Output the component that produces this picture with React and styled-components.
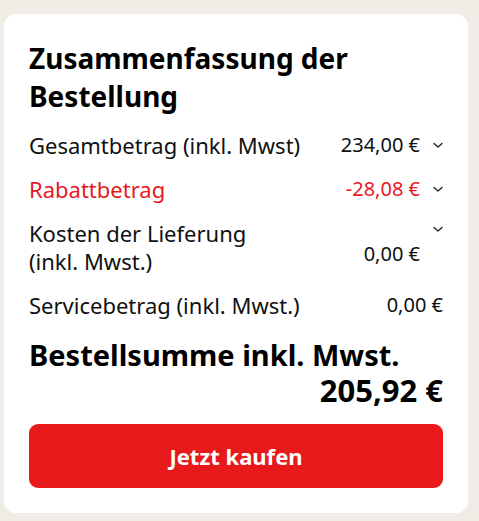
import styled, { createGlobalStyle } from "styled-components";

const Global = createGlobalStyle`
  body {
    margin: 0;
    background: #efebe5;
    font-family: "Noto Sans", "Open Sans", sans-serif;
    color: #0f1111;
  }
`;

const Page = styled.div`
  padding: 14px 11px 7px 4px;
`;

const Card = styled.div`
  background: #fff;
  border-radius: 12px;
  padding: 25px 25px 25px 25px;
  display: flex;
  flex-direction: column;
`;

const Title = styled.h2`
  margin: 0 0 8px 0;
  font-size: 28px;
  line-height: 38px;
  font-weight: 700;
  color: #000;
`;

const Row = styled.div`
  display: flex;
  justify-content: space-between;
  align-items: center;
  padding: 8px 0;
  font-size: 22px;
  line-height: 28px;
  color: ${(p) => (p.$red ? "#e5191f" : "#0f1111")};
`;

const Label = styled.div`
  white-space: ${(p) => (p.$wrap ? "normal" : "nowrap")};
  max-width: ${(p) => (p.$wrap ? "240px" : "none")};
`;

const AmountBox = styled.div`
  display: flex;
  align-items: ${(p) => (p.$top ? "flex-start" : "center")};
  gap: 13px;
`;

const Amount = styled.span`
  font-size: 20px;
  white-space: nowrap;
  padding-top: ${(p) => (p.$top ? "14px" : "0")};
`;

const Chevron = styled.svg`
  width: 10px;
  height: 10px;
  margin-top: ${(p) => (p.$top ? "-2px" : "0")};
`;

const TotalBlock = styled.div`
  margin-top: 11px;
  display: flex;
  flex-direction: column;
`;

const TotalLabel = styled.div`
  font-size: 29px;
  font-weight: 700;
  line-height: 34px;
  color: #000;
`;

const TotalValue = styled.div`
  text-align: right;
  font-size: 31px;
  font-weight: 700;
  line-height: 36px;
  color: #000;
`;

const BuyButton = styled.button`
  margin-top: 16px;
  height: 64px;
  border: none;
  border-radius: 9px;
  background: #e8191b;
  color: #fff;
  font-family: inherit;
  font-size: 22px;
  font-weight: 700;
  cursor: pointer;
`;

const Down = ({ top }) => (
  <Chevron $top={top} viewBox="0 0 10 10">
    <path d="M1 3.5 L5 7 L9 3.5" fill="none" stroke="#222" strokeWidth="1.4" strokeLinecap="round" strokeLinejoin="round" />
  </Chevron>
);

const rows = [
  { label: "Gesamtbetrag (inkl. Mwst)", amount: "234,00 €", chevron: true },
  { label: "Rabattbetrag", amount: "-28,08 €", chevron: true, red: true },
  { label: "Kosten der Lieferung (inkl. Mwst.)", amount: "0,00 €", chevron: true, top: true },
  { label: "Servicebetrag (inkl. Mwst.)", amount: "0,00 €" },
];

export default function App() {
  return (
    <Page>
      <Global />
      <Card>
        <Title>Zusammenfassung der Bestellung</Title>
        {rows.map((r) => (
          <Row key={r.label} $red={r.red}>
            <Label $wrap={r.top}>{r.label}</Label>
            <AmountBox $top={r.top}>
              <Amount $top={r.top}>{r.amount}</Amount>
              {r.chevron && <Down top={r.top} />}
            </AmountBox>
          </Row>
        ))}
        <TotalBlock>
          <TotalLabel>Bestellsumme inkl. Mwst.</TotalLabel>
          <TotalValue>205,92 €</TotalValue>
        </TotalBlock>
        <BuyButton>Jetzt kaufen</BuyButton>
      </Card>
    </Page>
  );
}
